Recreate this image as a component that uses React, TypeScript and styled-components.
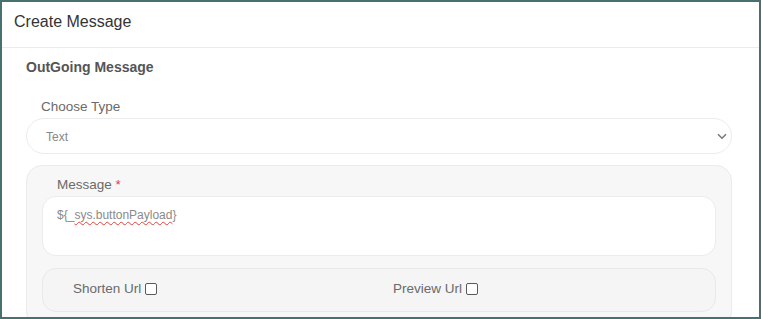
import styled, { createGlobalStyle } from "styled-components";

const GlobalStyle = createGlobalStyle`
  html, body {
    margin: 0;
    padding: 0;
    background: #ffffff;
  }
  * {
    box-sizing: border-box;
  }
`;

const Frame = styled.div`
  width: 761px;
  height: 319px;
  border: 2px solid #47706f;
  background: #ffffff;
  overflow: hidden;
  font-family: "Liberation Sans", Arial, sans-serif;
`;

const Header = styled.div`
  height: 46px;
  padding: 11px 12px 0;
  border-bottom: 1px solid #ebebeb;
  font-size: 16px;
  line-height: 18px;
  color: #333333;
`;

const Body = styled.div`
  padding: 9px 27px 0 24px;
`;

const SectionTitle = styled.div`
  font-size: 14px;
  font-weight: bold;
  line-height: 20px;
  color: #555555;
`;

const Label = styled.div<{ $top?: number }>`
  margin-top: ${(p) => p.$top ?? 0}px;
  padding: 1px 0 0 15px;
  font-size: 13.5px;
  line-height: 18px;
  color: #6a6a6a;
  margin-bottom: 2px;
`;

const Required = styled.span`
  color: #e53935;
`;

const SelectWrap = styled.div`
  position: relative;
`;

const Select = styled.select`
  appearance: none;
  width: 100%;
  height: 36px;
  padding: 1px 19px 0;
  border: 1px solid #ececec;
  border-radius: 18px;
  background: #ffffff;
  font-family: "Liberation Sans", Arial, sans-serif;
  font-size: 12px;
  color: #888888;
  outline: none;
`;

const Chevron = styled.svg`
  position: absolute;
  right: 5px;
  top: 15px;
  pointer-events: none;
`;

const Card = styled.div`
  margin-top: 11px;
  padding: 9px 15px 15px;
  border: 1px solid #ebebeb;
  border-radius: 16px;
  background: #f7f7f7;
`;

const MessageBox = styled.div`
  height: 60px;
  padding: 10px 14px;
  border: 1px solid #ececec;
  border-radius: 14px;
  background: #ffffff;
  font-size: 12px;
  line-height: 16px;
  color: #8a8a8a;
`;

const Misspelled = styled.span`
  text-decoration: underline wavy #e0443c;
  text-decoration-thickness: 1px;
  text-underline-offset: 2px;
`;

const OptionRow = styled.div`
  margin-top: 12px;
  height: 44px;
  padding: 0 0 3px 30px;
  display: grid;
  grid-template-columns: 320px 1fr;
  align-items: center;
  border: 1px solid #e9e9e9;
  border-radius: 14px;
  background: #f5f5f5;
`;

const Option = styled.label`
  display: flex;
  align-items: center;
  gap: 4px;
  font-size: 13.5px;
  color: #6a6a6a;
`;

const Check = styled.input`
  appearance: none;
  margin: 1px 0 0;
  width: 12px;
  height: 12px;
  border: 1px solid #5a5a5a;
  border-radius: 2px;
  background: #ffffff;
`;

export default function App() {
  return (
    <>
      <GlobalStyle />
      <Frame>
        <Header>Create Message</Header>
        <Body>
          <SectionTitle>OutGoing Message</SectionTitle>
          <Label $top={20}>Choose Type</Label>
          <SelectWrap>
            <Select defaultValue="text">
              <option value="text">Text</option>
            </Select>
            <Chevron width="10" height="7" viewBox="0 0 10 7">
              <path d="M1 1.2 L5 5.2 L9 1.2" fill="none" stroke="#777" strokeWidth="1.5" />
            </Chevron>
          </SelectWrap>
          <Card>
            <Label>
              Message <Required>*</Required>
            </Label>
            <MessageBox>
              ${"{"}_<Misspelled>sys.buttonPayload</Misspelled>{"}"}
            </MessageBox>
            <OptionRow>
              <Option>
                Shorten Url <Check type="checkbox" />
              </Option>
              <Option>
                Preview Url <Check type="checkbox" />
              </Option>
            </OptionRow>
          </Card>
        </Body>
      </Frame>
    </>
  );
}
